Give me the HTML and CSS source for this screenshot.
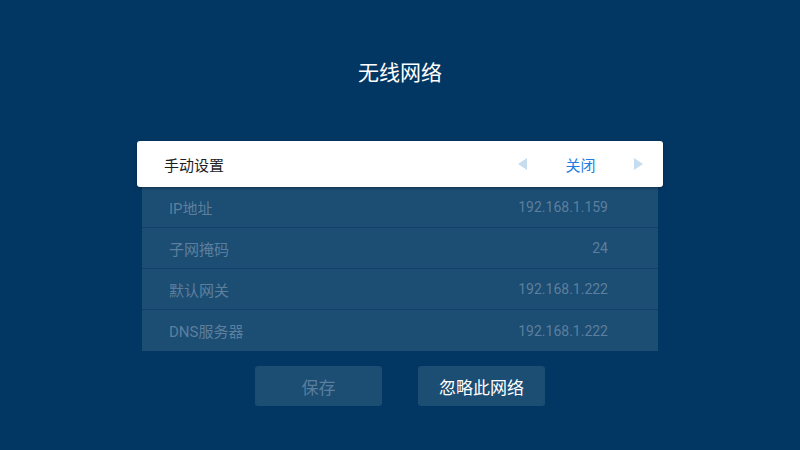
FILE: index.html
```html
<!DOCTYPE html>
<html lang="zh-CN">
<head>
<meta charset="utf-8">
<title>无线网络</title>
<link rel="stylesheet" href="styles.css">
</head>
<body>
<div class="page">
  <h1 class="title">无线网络</h1>
  <div class="card">
    <span class="card-label">手动设置</span>
    <div class="switcher">
      <span class="arrow arrow-left"></span>
      <span class="switch-value">关闭</span>
      <span class="arrow arrow-right"></span>
    </div>
  </div>
  <div class="rows">
    <div class="row"><span>IP地址</span><span class="value">192.168.1.159</span></div>
    <div class="row"><span>子网掩码</span><span class="value">24</span></div>
    <div class="row"><span>默认网关</span><span class="value">192.168.1.222</span></div>
    <div class="row"><span>DNS服务器</span><span class="value">192.168.1.222</span></div>
  </div>
  <div class="buttons">
    <div class="btn btn-disabled">保存</div>
    <div class="btn">忽略此网络</div>
  </div>
</div>
</body>
</html>
```
FILE: styles.css
```css
html, body {
  margin: 0;
  padding: 0;
}
body {
  width: 800px;
  height: 450px;
  background: #033763;
  font-family: Roboto, "Noto Sans CJK SC", sans-serif;
  overflow: hidden;
}
.page {
  display: flex;
  flex-direction: column;
  align-items: center;
}
.title {
  margin: 58px 0 0;
  font-size: 21px;
  line-height: 30px;
  font-weight: 400;
  color: #ffffff;
}
.card {
  margin-top: 53px;
  width: 526px;
  height: 46px;
  box-sizing: border-box;
  background: #ffffff;
  border-radius: 3px;
  box-shadow: 0 1px 3px rgba(0, 0, 0, 0.35);
  display: flex;
  align-items: center;
  justify-content: space-between;
  padding: 0 20px 0 27px;
  position: relative;
  z-index: 1;
}
.card-label {
  font-size: 15px;
  color: #1e1e1e;
}
.switcher {
  display: flex;
  align-items: center;
}
.switch-value {
  font-size: 15px;
  color: #1c7ee0;
  width: 107px;
  text-align: center;
}
.arrow {
  width: 0;
  height: 0;
  border-top: 6px solid transparent;
  border-bottom: 6px solid transparent;
}
.arrow-left {
  border-right: 9px solid #c6ddef;
}
.arrow-right {
  border-left: 9px solid #c6ddef;
}
.rows {
  width: 516px;
  background: #1c4d73;
  display: flex;
  flex-direction: column;
}
.row {
  height: 41px;
  box-sizing: border-box;
  border-bottom: 1px solid #12406a;
  display: flex;
  align-items: center;
  justify-content: space-between;
  padding: 0 50px 0 27px;
  font-size: 15px;
  color: #5d7f9d;
}
.row:last-child {
  border-bottom: none;
}
.value {
  font-size: 14px;
}
.buttons {
  margin-top: 15px;
  display: flex;
  gap: 36px;
}
.btn {
  width: 127px;
  height: 40px;
  border-radius: 3px;
  background: #1c4d73;
  color: #ffffff;
  font-size: 17px;
  display: flex;
  align-items: center;
  justify-content: center;
}
.btn-disabled {
  color: #5a7e9d;
}
```
